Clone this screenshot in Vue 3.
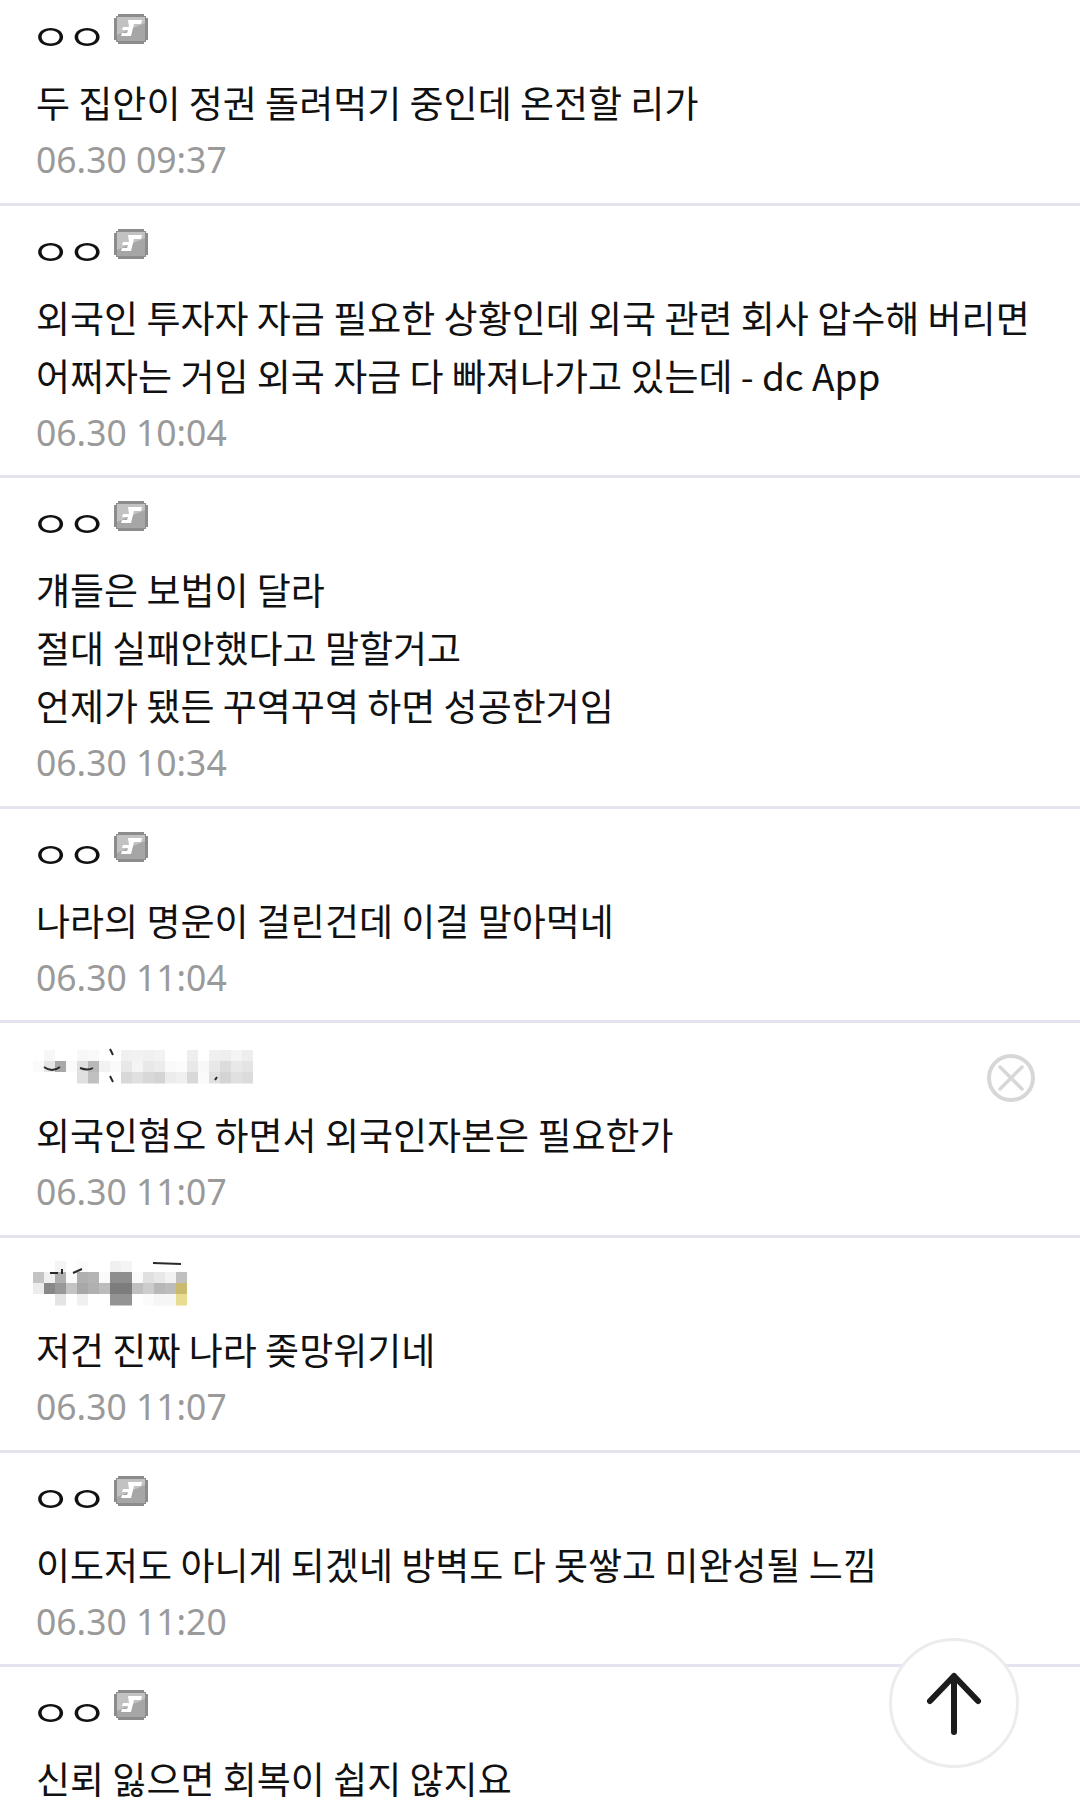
<template>
  <div class="page">
    <ul class="comment-list">
      <li v-for="(c, i) in comments" :key="i" class="comment">
        <div class="nick-row">
          <template v-if="!c.mosaic">
            <span class="nick">ㅇㅇ</span>
            <svg class="gallery-icon" width="34" height="30" viewBox="0 0 34 30">
              <path d="M4 0h26v2h2v2h2v22h-2v2h-2v2H4v-2H2v-2H0V4h2V2h2z" fill="#8c8c8c" />
              <rect x="3" y="3" width="28" height="24" fill="#a6a6a6" />
              <path d="M3 3h28v6L3 21z" fill="#c2c2c2" />
              <path d="M14 6h14l-1 4h-7l-3 12H7l1-3h5l1-3H8l1-3h6z" fill="#fff" />
            </svg>
          </template>
          <svg v-else class="mosaic" :width="c.mosaic.cols * 11" height="61" :viewBox="`0 0 ${c.mosaic.cols * 11} 61`">
            <template v-for="(row, r) in c.mosaic.rows" :key="r">
              <rect v-for="(shade, col) in row" :key="col" :x="col * 11" :y="c.mosaic.top + r * 11" width="11.5" height="11.5" :fill="shade" />
            </template>
            <path :d="c.mosaic.marks" fill="none" stroke="#2a2a2a" stroke-width="2" />
          </svg>
          <svg v-if="c.removable" class="del" width="50" height="50" viewBox="0 0 50 50">
            <circle cx="25" cy="25" r="22" fill="none" stroke="#d6d7d9" stroke-width="4" />
            <path d="M14 14l22 22M36 14L14 36" fill="none" stroke="#d6d7d9" stroke-width="3.5" stroke-linecap="round" />
          </svg>
        </div>
        <p v-for="(line, k) in c.lines" :key="k" class="text">{{ line }}</p>
        <div v-if="c.date" class="date">{{ c.date }}</div>
      </li>
    </ul>
    <button class="top-btn" type="button" aria-label="top">
      <svg width="64" height="70" viewBox="0 0 64 70">
        <path d="M32 8v56M8 33L32 8l24 25" fill="none" stroke="#1c1c1c" stroke-width="6" stroke-linecap="round" stroke-linejoin="round" />
      </svg>
    </button>
  </div>
</template>

<script setup>
// blurred nicknames in the screenshot, drawn as 11px mosaic cells
const mosaicA = {
  cols: 20,
  top: 7,
  rows: [
    ['#fff', '#f7f7f7', '#fff', '#fff', '#f7f7f7', '#f9f9f9', '#fff', '#fff', '#f0f0f0', '#f2f2f2', '#f0f0f0', '#f2f2f2', '#fff', '#fff', '#eee', '#fff', '#f0f0f0', '#eee', '#f4f4f4', '#eee'],
    ['#fafafa', '#e6e6e6', '#a8a8a8', '#fafafa', '#e0e0e0', '#b8b8b8', '#f2f2f2', '#fafafa', '#e8e8e8', '#f4f4f4', '#e8e8e8', '#ececec', '#fafafa', '#fcfcfc', '#e8e8e8', '#f8f8f8', '#e8e8e8', '#dcdcdc', '#e8e8e8', '#e4e4e4'],
    ['#fff', '#fff', '#fff', '#fff', '#e0e0e0', '#c0c0c0', '#fff', '#fff', '#d8d8d8', '#e0e0e0', '#d8d8d8', '#d4d4d4', '#ececec', '#f0f0f0', '#d8d8d8', '#fafafa', '#e0e0e0', '#d4d4d4', '#e0e0e0', '#dcdcdc'],
  ],
  marks: 'M11 24q8 6 16 0M47 25q8 3 13 0M77 6l3 6M77 33l3 6M182 37l2-3',
}
const mosaicB = {
  cols: 14,
  top: 3,
  rows: [
    ['#fff', '#fff', '#f4f4f4', '#fff', '#fbfbfb', '#fff', '#fff', '#f0f0f0', '#f4f4f4', '#fff', '#fff', '#fff', '#fff', '#fff'],
    ['#c4c4c4', '#f0f0f0', '#b0b0b0', '#fafafa', '#b0b0b0', '#b4b4b4', '#fafafa', '#8e8e8e', '#8e8e8e', '#fafafa', '#e0e0e0', '#e8e8e8', '#f2f2f2', '#c0c0c0'],
    ['#ececec', '#888', '#989898', '#c4c4c4', '#a8a8a8', '#b0b0b0', '#bcbcbc', '#7c7c7c', '#7c7c7c', '#c0c0c0', '#ccc', '#b8b8b8', '#bcbcbc', '#c9ba6e'],
    ['#fff', '#fff', '#e4e4e4', '#fff', '#f0f0f0', '#fff', '#fff', '#939393', '#939393', '#fff', '#fbfbfb', '#f6f6f6', '#f6f6f6', '#e8dc90'],
  ],
  marks: 'M17 15h8M29 11v5M40 15l9-4M120 5l28 1',
}

const comments = [
  { lines: ['두 집안이 정권 돌려먹기 중인데 온전할 리가'], date: '06.30 09:37' },
  { lines: ['외국인 투자자 자금 필요한 상황인데 외국 관련 회사 압수해 버리면', '어쩌자는 거임 외국 자금 다 빠져나가고 있는데 - dc App'], date: '06.30 10:04' },
  { lines: ['걔들은 보법이 달라', '절대 실패안했다고 말할거고', '언제가 됐든 꾸역꾸역 하면 성공한거임'], date: '06.30 10:34' },
  { lines: ['나라의 명운이 걸린건데 이걸 말아먹네'], date: '06.30 11:04' },
  { lines: ['외국인혐오 하면서 외국인자본은 필요한가'], date: '06.30 11:07', mosaic: mosaicA, removable: true },
  { lines: ['저건 진짜 나라 좆망위기네'], date: '06.30 11:07', mosaic: mosaicB },
  { lines: ['이도저도 아니게 되겠네 방벽도 다 못쌓고 미완성될 느낌'], date: '06.30 11:20' },
  { lines: ['신뢰 잃으면 회복이 쉽지 않지요'] },
]
</script>

<style scoped>
.page {
  position: relative;
  height: 1816px;
  overflow: hidden;
  background: #fff;
  font-family: "Noto Sans CJK KR", "Noto Sans", sans-serif;
}
.comment-list {
  list-style: none;
  margin: -9px 0 0;
  padding: 0;
}
.comment {
  padding: 20px 36px 15.6px;
  border-bottom: 3px solid #e3e4ee;
}
.nick-row {
  display: flex;
  align-items: flex-start;
  height: 62px;
  position: relative;
}
.nick {
  display: inline-block;
  margin-left: -3px;
  font-size: 41px;
  line-height: 48px;
  letter-spacing: -4px;
  color: #111;
  transform: scale(1.08, 0.88);
}
.gallery-icon {
  margin: 3px 0 0 14px;
}
.mosaic {
  margin-left: -3px;
  filter: blur(0.7px);
}
.del {
  position: absolute;
  right: 8px;
  top: 10px;
  filter: blur(0.4px);
}
.text {
  margin: 0;
  font-size: 37px;
  line-height: 58px;
  color: #111;
  white-space: nowrap;
}
.date {
  font-family: "Noto Sans", sans-serif;
  font-size: 35.5px;
  line-height: 56px;
  color: #9a9a9a;
}
.top-btn {
  position: absolute;
  left: 889px;
  top: 1638px;
  width: 130px;
  height: 130px;
  padding: 0;
  border: 3px solid #ececec;
  border-radius: 50%;
  background: #fff;
  display: flex;
  align-items: center;
  justify-content: center;
}
</style>
